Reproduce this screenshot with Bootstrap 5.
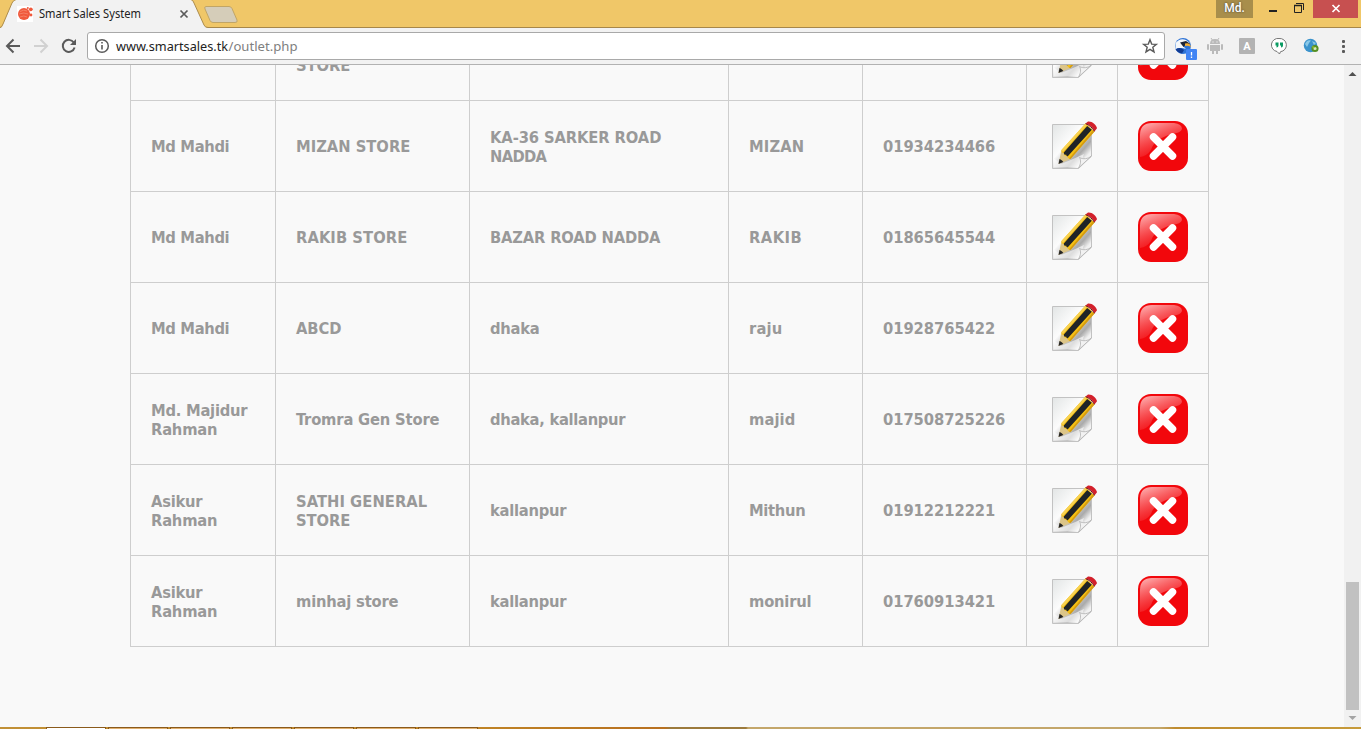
<!DOCTYPE html>
<html lang="en">
<head>
<meta charset="utf-8">
<title>Smart Sales System</title>
<link href="https://cdn.jsdelivr.net/npm/bootstrap@5.3.0/dist/css/bootstrap.min.css" rel="stylesheet">
<style>
body{font-family:"Open Sans","Noto Sans",sans-serif;background:#f9f9f9;height:729px;width:1361px}
svg{display:block}
.tabstrip{height:28px;background:#f0c768}
.strip-edge{border-bottom:1px solid #a78749}
.fit-title{font-family:"Noto Sans",sans-serif;font-size:12px;fill:#222}
.user-btn{width:37px;height:18px;background:#a88e4b;color:#fff;font:500 12px/16px Roboto,sans-serif;text-shadow:0 0 2px #333;margin-right:10px}
.close-btn{width:45px;height:18px;background:#c75050;margin-right:3px}
.toolbar{height:37px;background:#f2f2f2;border-bottom:1px solid #b2b2b2}
.omnibox{width:1078px;height:28px;margin-left:7px;border:1px solid #a9a9a9;border-radius:3px;background:#fff}
.fit-url{font-family:"Noto Sans",sans-serif;font-size:13px}
.viewport{height:662px;background:#f9f9f9}
.outlets{width:1079px;margin:-55px 0 0 130px;table-layout:fixed;border-collapse:separate;border-spacing:0;border-left:1px solid #cecece;color:#999;font:bold 16.4px/19px "DejaVu Sans Condensed","DejaVu Sans",sans-serif;font-stretch:condensed}
.outlets td{height:91px;padding:0 20px;border-right:1px solid #cecece;border-bottom:1px solid #cecece;vertical-align:middle;white-space:nowrap}
.outlets .two-line{padding-top:2px}
.scroller{width:17px;background:#f1f1f1}
.thumb{width:13px;height:128px;margin:0 2px;background:#c1c1c1}
.taskbar{height:2px;background:linear-gradient(90deg,#c19036 0,#bf8325 480px,#b87020 665px,#9c7a3c 670px,#9c7a3c 746px,#c4a76b 748px,#c4a76b 1160px,#bf8c30 1175px,#c69a3a 1361px)}
.task-gap{width:46px}
.task{width:60px;margin-right:2px;height:2px;border:1px solid #8a5a1c;border-bottom:0;background:#e0b070}
</style>
</head>
<body class="overflow-hidden d-flex flex-column">
<svg width="0" height="0" class="position-absolute" aria-hidden="true">
<defs>
<linearGradient id="paper" x1="0" y1="0" x2="1" y2="1"><stop offset="0" stop-color="#e2e5e5"/><stop offset=".4" stop-color="#fcfcfc"/><stop offset=".58" stop-color="#c5c5c5"/><stop offset=".68" stop-color="#aaa"/><stop offset=".8" stop-color="#f0f0f0"/><stop offset="1" stop-color="#fff"/></linearGradient>
<linearGradient id="gloss" x1="0" y1="0" x2=".5" y2="1"><stop offset="0" stop-color="#ffbcbc"/><stop offset=".9" stop-color="#f5262b" stop-opacity=".5"/></linearGradient>
<symbol id="edit" viewBox="0 0 50 50">
<path d="M5.500 3.500H44.500V35L31.500 47.500H5.500Z" fill="url(#paper)" stroke="#c2c2c2"/>
<path d="M6.500 46.500V37L14 43L26 38L37 33L32 46.500Z" fill="#fff" opacity=".6"/>
<path d="M31.500 47C34 43 34 39 32.500 36.500C36 38.500 41 38 44.500 35Z" fill="#f2f2f2" stroke="#b0b0b0" stroke-width=".8"/>
<path d="M11.500 43L14.500 29L23.500 38Z" fill="#dcc588"/>
<path d="M14.500 29L38.500 2.500L47.500 10.500L23.500 38Q21 38.500 20 35Q17 35.500 17 32Q14 32 14.500 29Z" fill="#f6c012"/>
<path d="M14.500 29L38.500 2.500L40 4L16 31Z" fill="#f8d252"/>
<path d="M22 37.500L46 9.300L47.500 10.500L23.500 38Z" fill="#d39b14"/>
<path d="M16.800 31.500L40.200 5L44.800 8.700L21 35Q19.500 36 19.300 33.700Q16.500 34.500 16.800 31.500Z" fill="#202427"/>
<path d="M38.500 2.500L41 .5C45 0 49.500 3.800 50 7.300L47.500 10.500C46 6.500 43 4 38.500 2.500Z" fill="#d3202b"/>
<path d="M38.500 2.700C42 4 45.500 6.500 47.400 10.300" fill="none" stroke="#781319"/>
<path d="M11.500 43L12.500 38C14 38.500 15.500 39.500 16.300 41Z" fill="#252525"/>
</symbol>
<symbol id="delete" viewBox="0 0 50 50">
<rect width="50" height="50" rx="13" fill="#f2070c"/>
<path d="M2 36V14Q2 2 14 2H36Q44 3 44 8Q43 12 34 13Q16 18 13 29Q9 35 2 36Z" fill="url(#gloss)"/>
<path d="M15.500 16L34.500 35M34.500 16L15.500 35" stroke="#fff" stroke-width="7.500" stroke-linecap="round"/>
</symbol>
</defs></svg>

<header class="tabstrip d-flex flex-shrink-0">
<svg width="260" height="28">
<path d="M0 27.500H260" stroke="#a78749"/>
<path d="M0 28L2 27Q4 22 12 3Q13.500 0 16 0H191Q193 0 194 3L204 25Q205 27.500 208 28Z" fill="#f2f2f2"/>
<path d="M0 27.500Q2 27 3 24L12 3Q13.500 0 16 -.5H191Q193 0 194 3L204 25Q205 27.500 208 27.500" fill="none" stroke="#ad8d4d"/>
<path d="M206 6.500H229Q231 6.500 232 8.500L237 20Q238 22.500 235 22.500H213Q211 22.500 210 20.500L205 9Q204 6.500 206 6.500Z" fill="#d5cdb9" stroke="#c1a566"/>
<rect x="17" y="6" width="16" height="16" fill="#fff"/>
<circle cx="24" cy="14" r="6" fill="#f0593c"/><path d="M20 11.500Q24 9 27 11M19 14Q24 12 28 14M20 17Q24 15 27 17" stroke="#f68a70" stroke-width=".8" fill="none"/>
<circle cx="30.800" cy="9.300" r="1.900" fill="#f0593c"/><circle cx="31" cy="15" r="1.400" fill="#f0593c"/><circle cx="27.800" cy="8" r="1" fill="#f0593c"/>
<text x="39" y="18" textLength="102" lengthAdjust="spacingAndGlyphs" class="fit-title">Smart Sales System</text>
<path d="M180.500 10.500L187.500 17.500M187.500 10.500L180.500 17.500" stroke="#5a5a5a" stroke-width="1.700"/>
</svg>
<div class="strip-edge flex-grow-1 d-flex justify-content-end align-items-start">
<div class="user-btn text-center">Md.</div>
<svg width="50" height="18"><path d="M6 11H14" stroke="#222" stroke-width="2"/><path d="M31.500 5.500H38.500V12.500H31.500ZM33 3.500H40.500V10" fill="none" stroke="#222"/><path d="M31 5.500H39" stroke="#222" stroke-width="1.500"/></svg>
<div class="close-btn"><svg width="45" height="18"><path d="M19.500 5L26.500 12M26.500 5L19.500 12" stroke="#fff" stroke-width="1.700"/></svg></div>
</div>
</header>

<nav class="toolbar d-flex align-items-center flex-shrink-0">
<svg width="80" height="36" fill="none" stroke="#5a5a5a" stroke-width="2">
<path d="M20 18H7.500M13.500 11.500L7 18L13.500 24.500"/>
<path d="M34 18H46.500M40.500 11.500L47 18L40.500 24.500" stroke="#d1d1d1"/>
<path d="M73.800 14.500A6 6 0 1 0 74.600 19.500"/><path d="M76 11V17H70Z" fill="#5a5a5a" stroke="none"/>
</svg>
<div class="omnibox d-flex align-items-center justify-content-between">
<svg width="240" height="26"><circle cx="14" cy="13" r="6.300" fill="none" stroke="#5a5a5a" stroke-width="1.500"/><path d="M14 12V16.500M14 9V10.600" stroke="#5a5a5a" stroke-width="1.600"/>
<text x="28" y="17.500" textLength="112" lengthAdjust="spacingAndGlyphs" class="fit-url" fill="#222">www.smartsales.tk</text>
<text x="140.500" y="17.500" textLength="69" lengthAdjust="spacingAndGlyphs" class="fit-url" fill="#808080">/outlet.php</text></svg>
<svg width="28" height="26"><path d="M14 6.700L15.700 11.100L20.400 11.400L16.800 14.300L18 18.900L14 16.300L10 18.900L11.200 14.300L7.600 11.400L12.300 11.100Z" fill="none" stroke="#5a5a5a" stroke-width="1.400"/></svg>
</div>
<svg width="196" height="36">
<circle cx="18" cy="18" r="8" fill="#2f74d6"/><path d="M10.500 15Q15 9.500 21 12L26 16Q20 15 18 18L21 21Q16 19 10.500 21Z" fill="#f4f7fa"/><path d="M15 14.500L21 13L25.500 16Q20 16 18.500 19Z" fill="#1d2535"/><path d="M20 15.500Q25 14 26 19Q23 17 20 18Z" fill="#f3ae34"/><path d="M10.500 21.500Q15 18.500 19 22L17 25.500Q13 25 10.500 21.500Z" fill="#123c94"/>
<rect x="21" y="21" width="11" height="11" rx="1" fill="#4285f4"/><path d="M26.500 24V27.500M26.500 28.500V30" stroke="#fff" stroke-width="1.300"/>
<g fill="#bababa"><path d="M45 16Q45 11 50 11Q55 11 55 16ZM45 17H55V23H53V26H51V23H49V26H47V23H45Z"/><rect x="42" y="16" width="2" height="6" rx="1"/><rect x="56" y="16" width="2" height="6" rx="1"/><path d="M46 10L48 13M54 10L52 13" stroke="#bababa"/></g><path d="M47.500 14h1M51.500 14h1" stroke="#fff"/>
<rect x="74" y="10" width="16" height="16" rx="1" fill="#b3b3b3"/><text x="82" y="22" text-anchor="middle" font-family="Roboto,sans-serif" font-weight="700" font-size="11" fill="#fff">A</text>
<path d="M114 10.500A6.500 6.500 0 1 1 115.500 23.700L114.500 26L112 23.500A6.500 6.500 0 0 1 114 10.500Z" fill="#fff" stroke="#777"/><path d="M110.500 14.500h3v3q0 2-2 2v-2h-1ZM115 14.500h3v3q0 2-2 2v-2h-1Z" fill="#0b9b63"/>
<circle cx="145.500" cy="17.500" r="6.700" fill="#3b93cc"/><path d="M140 16Q142 11 146 12.500L144 15L142 19ZM147 13L151 15L149 17Z" fill="#8ac8e7"/><circle cx="150" cy="20.500" r="2.600" fill="#d9e8c0" stroke="#559022" stroke-width="2"/><path d="M147 18l3 1-2 2" fill="#98be39"/>
<g fill="#5a5a5a"><rect x="177" y="12" width="3" height="3" rx="1"/><rect x="177" y="17" width="3" height="3" rx="1"/><rect x="177" y="22" width="3" height="3" rx="1"/></g>
</svg>
</nav>

<div class="viewport d-flex overflow-hidden flex-shrink-0">
<main class="flex-grow-1 overflow-hidden">
<table class="outlets">
<colgroup><col style="width:145px"><col style="width:194px"><col style="width:259px"><col style="width:134px"><col style="width:164px"><col style="width:91px"><col style="width:91px"></colgroup>
<tbody id="rows"></tbody>
</table>
</main>
<aside class="scroller d-flex flex-column">
<svg width="17" height="17"><path d="M4.500 11L8.500 7L12.500 11Z" fill="#505050"/></svg>
<div class="flex-grow-1"></div><div class="thumb"></div>
<svg width="17" height="17"><path d="M4.500 6L8.500 10L12.500 6Z" fill="#a3a3a3"/></svg>
</aside>
</div>
<footer class="taskbar d-flex flex-shrink-0 overflow-hidden">
<div class="task-gap"></div><div class="task bg-white"></div><div class="task"></div><div class="task"></div><div class="task"></div><div class="task"></div><div class="task"></div><div class="task"></div>
</footer>
<script src="https://cdn.jsdelivr.net/npm/bootstrap@5.3.0/dist/js/bootstrap.bundle.min.js"></script>
<script>
// Each text line is paired with its width in pixels.
const outlets=[
[[],[["",0],["STORE",54]],[],[],[]],
[[["Md Mahdi",78]],[["MIZAN STORE",114]],[["KA-36 SARKER ROAD",171],["NADDA",56]],[["MIZAN",55]],[["01934234466",112]]],
[[["Md Mahdi",78]],[["RAKIB STORE",111]],[["BAZAR ROAD NADDA",170]],[["RAKIB",53]],[["01865645544",112]]],
[[["Md Mahdi",78]],[["ABCD",45]],[["dhaka",49]],[["raju",33]],[["01928765422",112]]],
[[["Md. Majidur",96],["Rahman",66]],[["Tromra Gen Store",143]],[["dhaka, kallanpur",135]],[["majid",46]],[["017508725226",122]]],
[[["Asikur",51],["Rahman",66]],[["SATHI GENERAL",131],["STORE",54]],[["kallanpur",76]],[["Mithun",56]],[["01912212221",112]]],
[[["Asikur",51],["Rahman",66]],[["minhaj store",102]],[["kallanpur",76]],[["monirul",62]],[["01760913421",112]]]];
const body=document.getElementById('rows');
for(const outlet of outlets){
  const tr=body.insertRow();
  for(const lines of outlet){
    const td=tr.insertCell();
    if(lines.length>1)td.className='two-line';
    for(const [text,width] of lines){
      const div=document.createElement('div'),span=document.createElement('span');
      span.textContent=text||'\u00a0';div.append(span);td.append(div);
      if(text)span.style.letterSpacing=(width+.3-span.getBoundingClientRect().width)/text.length+'px';
    }
  }
  for(const icon of ['edit','delete'])
    tr.insertCell().innerHTML=`<svg width="50" height="50"><use href="#${icon}"/></svg>`;
}
</script>
</body>
</html>
